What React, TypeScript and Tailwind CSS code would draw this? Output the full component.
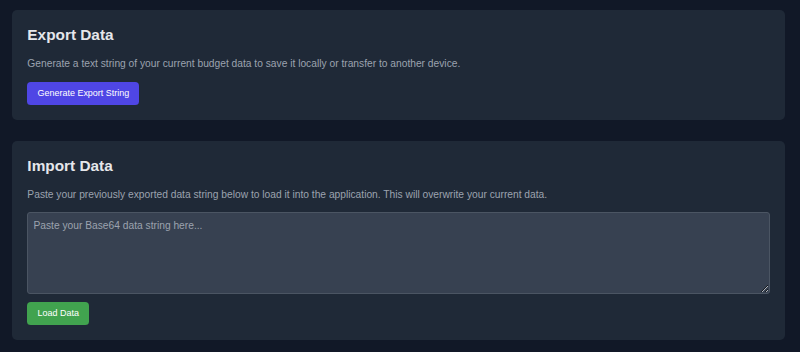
export default function App() {
  return (
    <div className="min-h-screen bg-[#111827] pt-[10px] pl-[12px] pr-[14.7px] font-['Liberation_Sans',Arial,sans-serif]">
      <section className="mb-[20.5px] rounded-[5px] bg-[#1f2937] p-[15.36px]">
        <h2 className="mb-[10.24px] text-[15.36px] leading-[20.48px] font-bold text-[#e5e7eb]">
          Export Data
        </h2>
        <p className="mb-[10.24px] text-[10.24px] leading-[15.36px] text-[#9ca3af]">
          Generate a text string of your current budget data to save it locally or transfer to another device.
        </p>
        <button className="block rounded-[3.84px] bg-[#4f46e5] px-[10.24px] py-[5.12px] text-[8.96px] leading-[12.8px] text-white">
          Generate Export String
        </button>
      </section>

      <section className="rounded-[5px] bg-[#1f2937] p-[15.36px]">
        <h2 className="mb-[10.24px] text-[15.36px] leading-[20.48px] font-bold text-[#e5e7eb]">
          Import Data
        </h2>
        <p className="mb-[10.24px] text-[10.24px] leading-[15.36px] text-[#9ca3af]">
          Paste your previously exported data string below to load it into the application. This will overwrite your current data.
        </p>
        <textarea
          className="block h-[81.92px] w-full rounded-[3px] border border-[#4b5563] bg-[#374151] p-[5.12px] text-[10.24px] leading-[15.36px] text-[#e5e7eb] placeholder:text-[#9ca3af] outline-none"
          placeholder="Paste your Base64 data string here..."
        />
        <button className="mt-[7.68px] block rounded-[3.84px] bg-[#41a34f] px-[10.24px] py-[5.12px] text-[8.96px] leading-[12.8px] text-white">
          Load Data
        </button>
      </section>
    </div>
  );
}
